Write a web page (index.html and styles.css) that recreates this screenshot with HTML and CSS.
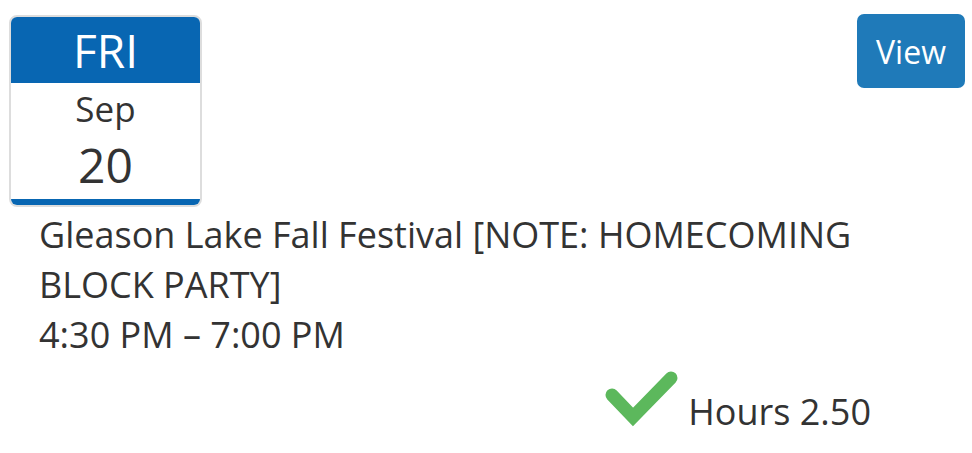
FILE: index.html
```html
<!DOCTYPE html>
<html lang="en">
<head>
  <meta charset="UTF-8">
  <title>Event</title>
  <link rel="stylesheet" href="styles.css">
</head>
<body>

  <div class="event-card">
    <div class="event-top">
      <div class="cal">
        <div class="cal-inner">
          <div class="cal-day">FRI</div>
          <div class="cal-body">
            <div class="cal-month">Sep</div>
            <div class="cal-date">20</div>
          </div>
        </div>
      </div>
      <button class="btn-view">View</button>
    </div>

    <div class="event-info">
      <div class="event-title">Gleason Lake Fall Festival [NOTE: HOMECOMING BLOCK PARTY]</div>
      <div class="event-time">4:30 PM – 7:00 PM</div>
    </div>

    <div class="event-hours">
      <svg class="check" width="76" height="64" viewBox="0 0 76 64">
        <polyline points="9,31 30,53 68,14" fill="none" stroke="#5cb85c" stroke-width="13" stroke-linecap="round" stroke-linejoin="miter"/>
      </svg>
      <span class="hours-text">Hours 2.50</span>
    </div>
  </div>

</body>
</html>
```

FILE: styles.css
```css
body, html {
  margin: 0;
  padding: 0;
  font-family: 'Open Sans', sans-serif;
  background-color: #fff;
  color: #333;
}

.event-card {
  width: 972px;
  height: 453px;
  box-sizing: border-box;
  padding: 14px 7px 0 9px;
}

.event-top {
  display: flex;
  justify-content: space-between;
  align-items: flex-start;
}

.cal {
  width: 189px;
  margin-top: 1px;
  border: 2px solid #dddddd;
  border-radius: 8px;
}

.cal-inner {
  border-bottom: 6px solid #0866b2;
  border-radius: 6px;
  overflow: hidden;
  text-align: center;
}

.cal-day {
  height: 66px;
  line-height: 66px;
  background-color: #0866b2;
  color: #fff;
  font-size: 46px;
}

.cal-body {
  height: 116px;
  padding-top: 4px;
  box-sizing: border-box;
}

.cal-month {
  font-size: 35px;
  line-height: 44px;
}

.cal-date {
  font-size: 48px;
  line-height: 68px;
}

.btn-view {
  width: 108px;
  height: 74px;
  padding: 0;
  background-color: #1f7ab9;
  color: #fff;
  border: none;
  border-radius: 7px;
  font-family: 'Open Sans', sans-serif;
  font-size: 32px;
  cursor: pointer;
}

.event-info {
  margin-top: 3px;
  padding: 0 60px 0 30px;
  font-size: 36px;
  line-height: 50px;
}

.event-hours {
  display: flex;
  justify-content: flex-end;
  align-items: flex-start;
  gap: 9px;
  margin-top: 4px;
  padding-right: 94px;
  font-size: 36px;
  line-height: 50px;
}

.check {
  display: block;
}

.hours-text {
  margin-top: 23px;
}
```
